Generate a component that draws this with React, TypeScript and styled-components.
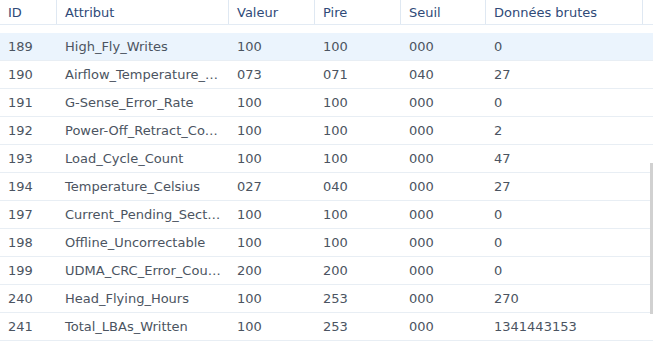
import { FC } from 'react';
import styled, { createGlobalStyle } from 'styled-components';

const COLUMNS = '57px 172px 86px 86px 85px 157px 1fr';

interface IRow {
  id: number;
  name: string;
  value: string;
  worst: string;
  threshold: string;
  raw: string;
}

// names are shown as the grid cuts them
const ROWS: IRow[] = [
  { id: 189, name: 'High_Fly_Writes', value: '100', worst: '100', threshold: '000', raw: '0' },
  { id: 190, name: 'Airflow_Temperature_…', value: '073', worst: '071', threshold: '040', raw: '27' },
  { id: 191, name: 'G-Sense_Error_Rate', value: '100', worst: '100', threshold: '000', raw: '0' },
  { id: 192, name: 'Power-Off_Retract_Co…', value: '100', worst: '100', threshold: '000', raw: '2' },
  { id: 193, name: 'Load_Cycle_Count', value: '100', worst: '100', threshold: '000', raw: '47' },
  { id: 194, name: 'Temperature_Celsius', value: '027', worst: '040', threshold: '000', raw: '27' },
  { id: 197, name: 'Current_Pending_Sect…', value: '100', worst: '100', threshold: '000', raw: '0' },
  { id: 198, name: 'Offline_Uncorrectable', value: '100', worst: '100', threshold: '000', raw: '0' },
  { id: 199, name: 'UDMA_CRC_Error_Cou…', value: '200', worst: '200', threshold: '000', raw: '0' },
  { id: 240, name: 'Head_Flying_Hours', value: '100', worst: '253', threshold: '000', raw: '270' },
  { id: 241, name: 'Total_LBAs_Written', value: '100', worst: '253', threshold: '000', raw: '1341443153' },
];

const HEADERS = ['ID', 'Attribut', 'Valeur', 'Pire', 'Seuil', 'Données brutes'];

const GlobalStyle = createGlobalStyle`
  html, body {
    margin: 0;
    padding: 0;
    background: #ffffff;
  }
  body {
    font-family: 'DejaVu Sans', Verdana, sans-serif;
    font-size: 13px;
  }
`;

const STable = styled.div`
  position: relative;
  width: 653px;
  height: 346px;
  overflow: hidden;
  background: #ffffff;
`;
const SHeader = styled.div`
  display: grid;
  grid-template-columns: ${COLUMNS};
  height: 24px;
  border-bottom: 1px solid #e3ebf4;
`;
const SHeaderCell = styled.div<{ last?: boolean }>`
  display: flex;
  align-items: center;
  padding: 0 8px;
  color: #2f4a78;
  white-space: nowrap;
  border-right: ${({ last }) => (last ? 'none' : '1px solid #dfe8f2')};
`;
const SBody = styled.div`
  padding-top: 8px;
`;
const SRow = styled.div<{ selected?: boolean }>`
  display: grid;
  grid-template-columns: ${COLUMNS};
  height: 27px;
  border-bottom: 1px solid #e8eef4;
  background: ${({ selected }) => (selected ? '#ebf4fd' : 'transparent')};
`;
const SCell = styled.div`
  display: flex;
  align-items: center;
  padding: 0 4px 0 8px;
  color: #4b5461;
  white-space: nowrap;
  min-width: 0;
`;
const SScrollThumb = styled.div`
  position: absolute;
  right: 0;
  top: 163px;
  width: 3px;
  height: 151px;
  background: #d1d1d1;
`;

const App: FC = () => {
  return (
    <>
      <GlobalStyle />
      <STable>
        <SHeader>
          {HEADERS.map((h) => (
            <SHeaderCell key={h}>{h}</SHeaderCell>
          ))}
          <SHeaderCell last />
        </SHeader>
        <SBody>
          {ROWS.map((row, i) => (
            <SRow key={row.id} selected={i === 0}>
              <SCell>{row.id}</SCell>
              <SCell>{row.name}</SCell>
              <SCell>{row.value}</SCell>
              <SCell>{row.worst}</SCell>
              <SCell>{row.threshold}</SCell>
              <SCell>{row.raw}</SCell>
              <SCell />
            </SRow>
          ))}
        </SBody>
        <SScrollThumb />
      </STable>
    </>
  );
};

export default App;
